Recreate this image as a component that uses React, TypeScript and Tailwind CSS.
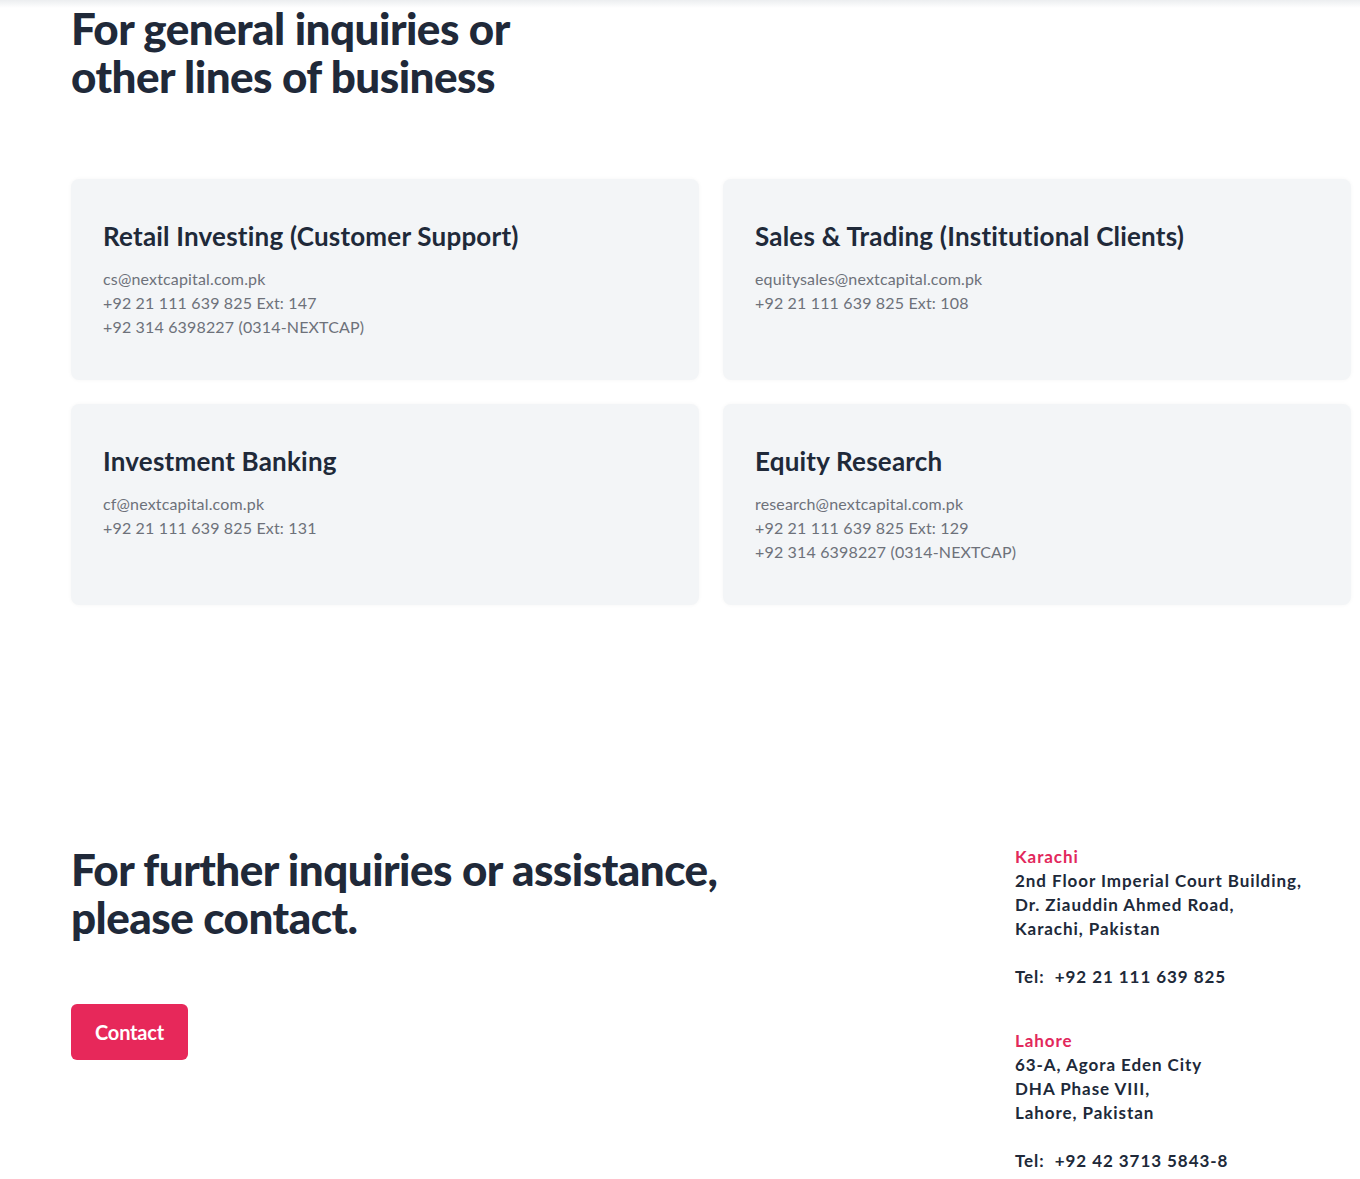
const cards = [
  {
    title: "Retail Investing (Customer Support)",
    lines: ["cs@nextcapital.com.pk", "+92 21 111 639 825 Ext: 147", "+92 314 6398227 (0314-NEXTCAP)"],
  },
  {
    title: "Sales & Trading (Institutional Clients)",
    lines: ["equitysales@nextcapital.com.pk", "+92 21 111 639 825 Ext: 108"],
  },
  {
    title: "Investment Banking",
    lines: ["cf@nextcapital.com.pk", "+92 21 111 639 825 Ext: 131"],
  },
  {
    title: "Equity Research",
    lines: ["research@nextcapital.com.pk", "+92 21 111 639 825 Ext: 129", "+92 314 6398227 (0314-NEXTCAP)"],
  },
];

const offices = [
  {
    city: "Karachi",
    address: ["2nd Floor Imperial Court Building,", "Dr. Ziauddin Ahmed Road,", "Karachi, Pakistan"],
    tel: "+92 21 111 639 825",
  },
  {
    city: "Lahore",
    address: ["63-A, Agora Eden City", "DHA Phase VIII,", "Lahore, Pakistan"],
    tel: "+92 42 3713 5843-8",
  },
];

const font = { fontFamily: "Lato, 'Noto Sans', sans-serif" };

export default function App() {
  return (
    <div className="relative min-h-[1179px] bg-white text-[#202939]" style={font}>
      {/* header shadow bleeding in from above */}
      <div className="pointer-events-none absolute inset-x-0 top-0 h-2 bg-gradient-to-b from-[#eceef0] to-transparent" />

      <div className="w-[1280px] pl-[71px] box-content">
        <h2 className="pt-1 max-w-[500px] text-[44px] leading-[48px] font-black tracking-[-0.012em]">
          For general inquiries or other lines of business
        </h2>

        {/* departments */}
        <div className="mt-[79px] grid grid-cols-2 gap-6">
          {cards.map((card) => (
            <div
              key={card.title}
              className="h-[201px] rounded-lg bg-[#f3f5f7] px-8 pt-[41px] shadow-[0_0_4px_rgba(0,0,0,0.04)]"
            >
              <h3 className="text-[26px] leading-8 font-bold tracking-[0.008em]">{card.title}</h3>
              <div className="mt-[15px] text-[16px] leading-6 text-[#6d717a] tracking-[0.01em]">
                {card.lines.map((line) => (
                  <p key={line}>{line}</p>
                ))}
              </div>
            </div>
          ))}
        </div>

        {/* further contact */}
        <div className="mt-[240px] flex justify-between">
          <div>
            <h2 className="max-w-[700px] text-[44px] leading-[48px] font-black tracking-[-0.012em]">
              For further inquiries or assistance, please contact.
            </h2>
            <button className="mt-[63px] flex h-14 w-[117px] items-center justify-center rounded-md bg-[#e7285a] text-[20px] font-bold text-white tracking-[-0.01em]">
              Contact
            </button>
          </div>

          <div className="w-[336px] pb-2 text-[17px] leading-6 font-bold tracking-[0.055em]">
            {offices.map((office, idx) => (
              <div key={office.city} className={idx > 0 ? "mt-10" : ""}>
                <p className="text-[#e2285c]">{office.city}</p>
                {office.address.map((line) => (
                  <p key={line} className="whitespace-nowrap">
                    {line}
                  </p>
                ))}
                <p className="mt-6">
                  Tel:&nbsp; {office.tel}
                </p>
              </div>
            ))}
          </div>
        </div>
      </div>
    </div>
  );
}
